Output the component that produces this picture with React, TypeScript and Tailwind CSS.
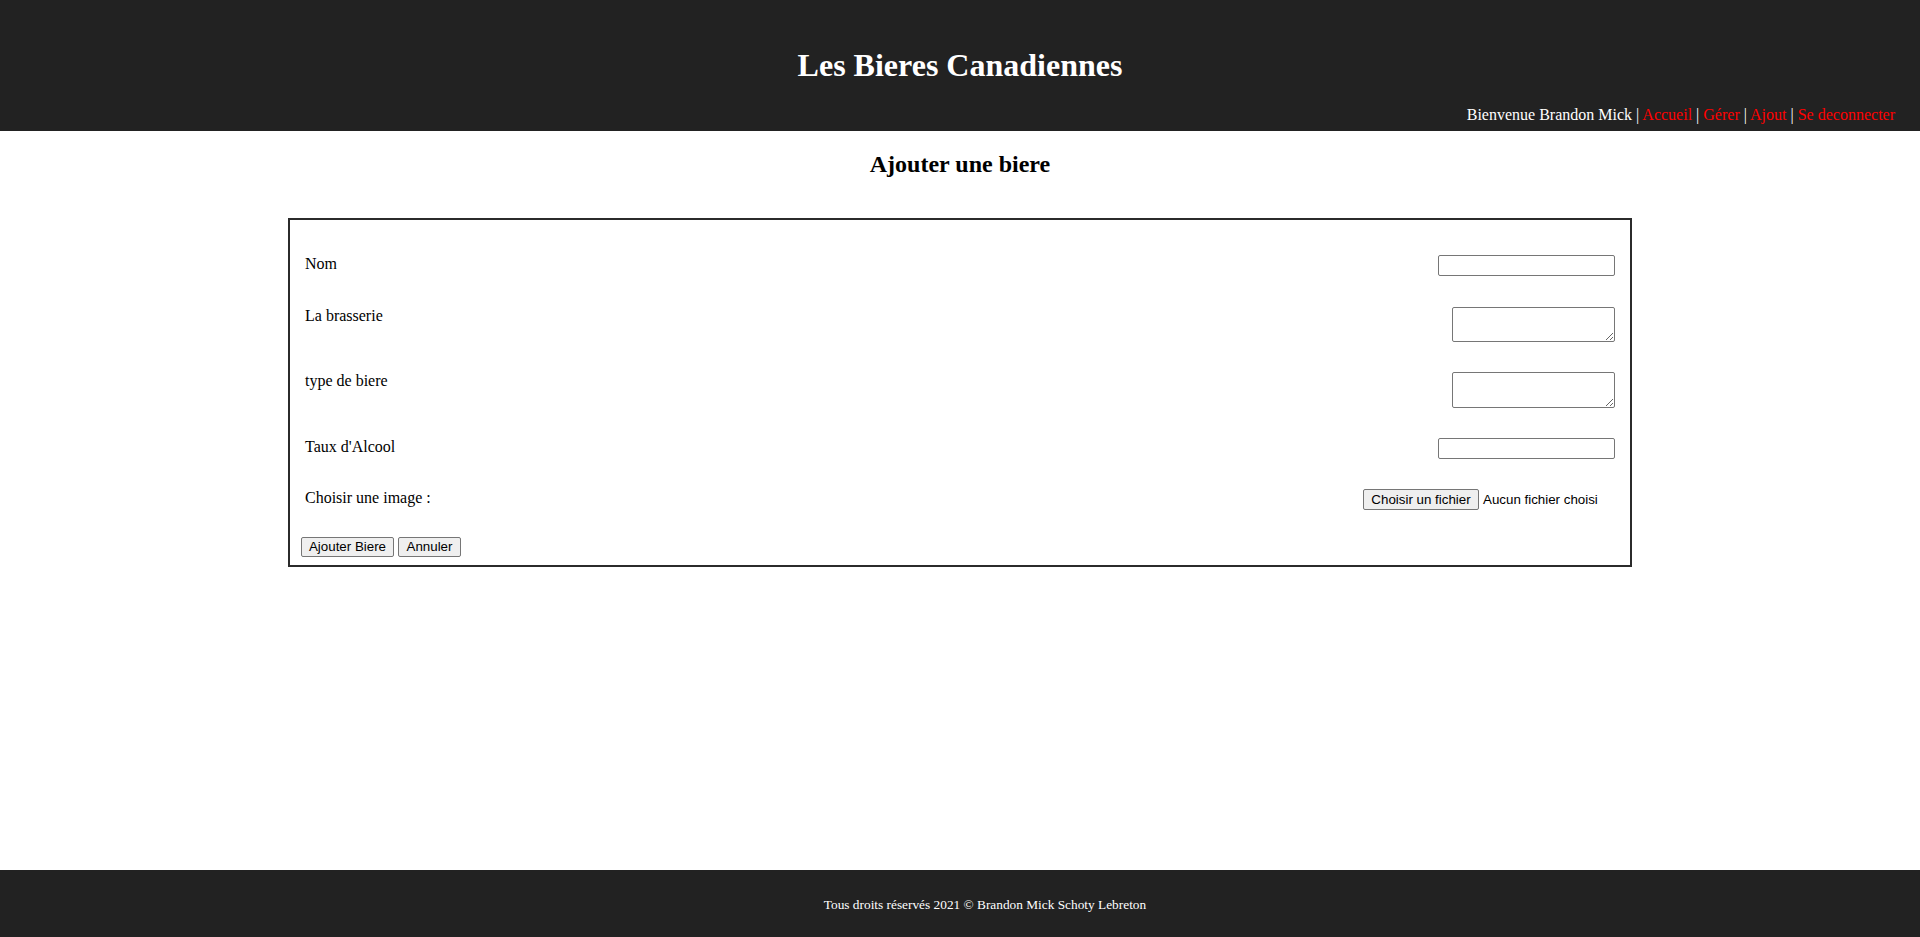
import { useState } from "react";

const serif = { fontFamily: '"Liberation Serif", "Times New Roman", serif' };

type RowProps = {
  label: string;
  gap?: string;
  children: React.ReactNode;
};

function Row({ label, gap = "", children }: RowProps) {
  return (
    <div className={`flex items-start justify-between pl-[4px] ${gap}`}>
      <label className="text-[16px] leading-[17px] text-black">{label}</label>
      {children}
    </div>
  );
}

function FakeFile() {
  const [name, setName] = useState<string>();
  return (
    <label
      className="flex h-[21px] w-[252px] cursor-default items-center gap-[4px] text-[13.33px] text-black"
      style={{ fontFamily: '"Liberation Sans", Arial, sans-serif' }}
    >
      <span className="flex h-[21px] w-[116px] items-center justify-center rounded-[2px] border border-[#767676] bg-[#efefef]">
        Choisir un fichier
      </span>
      <span>{name ?? "Aucun fichier choisi"}</span>
      <input
        type="file"
        className="hidden"
        onChange={(e) => setName(e.target.files?.[0]?.name)}
      />
    </label>
  );
}

export default function App() {
  const btn =
    "h-[20px] rounded-[2px] border border-[#767676] bg-[#efefef] px-[6px] text-[13.33px] leading-[16px] text-black";

  return (
    <div className="flex min-h-[937px] flex-col bg-white" style={serif}>
      <header className="bg-[#222222] pb-[7px] pt-[47px] text-white">
        <h1 className="text-center text-[32px] font-bold leading-[37px]">Les Bieres Canadiennes</h1>
        <nav className="mt-[22px] pr-[25px] text-right text-[16px] leading-[18px]">
          Bienvenue Brandon Mick |{" "}
          <a href="#" className="text-[red]">Accueil</a> |{" "}
          <a href="#" className="text-[red]">Gérer</a> |{" "}
          <a href="#" className="text-[red]">Ajout</a> |{" "}
          <a href="#" className="text-[red]">Se deconnecter</a>
        </nav>
      </header>

      <main className="flex-1">
        <h2 className="mt-[19px] text-center text-[24px] font-bold leading-[28px] text-black">
          Ajouter une biere
        </h2>

        <form
          className="mx-auto mt-[40px] w-[70%] border-2 border-[#2b2b2b] pb-[8px] pl-[11px] pr-[15px] pt-[35px]"
          onSubmit={(e) => e.preventDefault()}
        >
          <Row label="Nom">
            <input
              type="text"
              className="h-[21px] w-[177px] rounded-[2px] border border-[#767676] bg-white px-[2px] text-[13px]"
            />
          </Row>
          <Row label="La brasserie" gap="mt-[31px]">
            <textarea className="h-[35px] w-[163px] rounded-[2px] border border-[#767676] bg-white" />
          </Row>
          <Row label="type de biere" gap="mt-[30px]">
            <textarea className="h-[36px] w-[163px] rounded-[2px] border border-[#767676] bg-white" />
          </Row>
          <Row label="Taux d'Alcool" gap="mt-[30px]">
            <input
              type="text"
              className="h-[21px] w-[177px] rounded-[2px] border border-[#767676] bg-white px-[2px] text-[13px]"
            />
          </Row>
          <Row label="Choisir une image :" gap="mt-[30px]">
            <FakeFile />
          </Row>

          <div
            className="mt-[27px] flex gap-[4px]"
            style={{ fontFamily: '"Liberation Sans", Arial, sans-serif' }}
          >
            <button type="submit" className={`${btn} w-[93px]`}>Ajouter Biere</button>
            <button type="button" className={`${btn} w-[63px]`}>Annuler</button>
          </div>
        </form>
      </main>

      <footer className="h-[67px] bg-[#222222] pl-[50px] pt-[27px] text-center text-[13.33px] leading-[16px] text-white">
        Tous droits réservés 2021 © Brandon Mick Schoty Lebreton
      </footer>
    </div>
  );
}
